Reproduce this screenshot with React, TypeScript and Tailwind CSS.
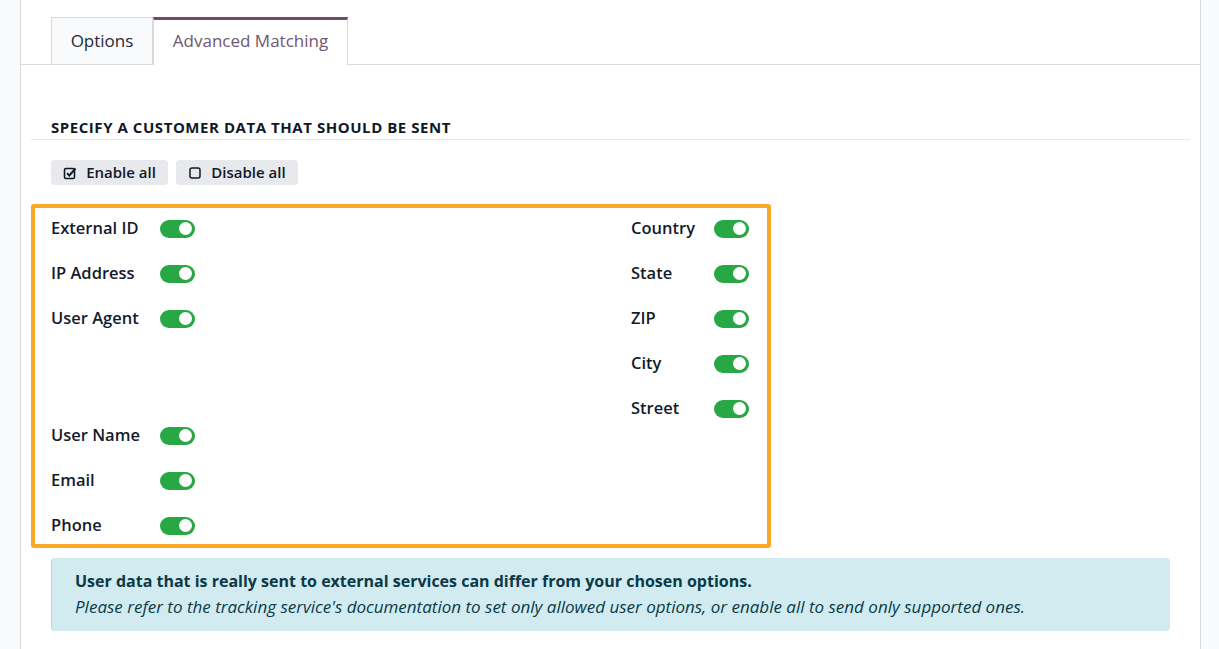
import React from "react";

const Toggle = () => (
  <div className="relative w-[35px] h-[18px] rounded-full bg-[#28a745] shrink-0">
    <div className="absolute right-[3px] top-[2.5px] w-[13px] h-[13px] rounded-full bg-white" />
  </div>
);

const Row = ({ label, w }: { label: string; w: string }) => (
  <div className="flex items-center h-[45px]">
    <div className={`${w} text-[16.5px] font-semibold text-[#141b2d]`}>{label}</div>
    <Toggle />
  </div>
);

const CheckedIcon = () => (
  <svg width="14" height="14" viewBox="0 0 14 14" fill="none">
    <rect x="1.5" y="2.5" width="10" height="10" rx="1.5" stroke="#111827" strokeWidth="1.6" />
    <path d="M4 7.2 L6.3 9.5 L12.5 2.5" stroke="#111827" strokeWidth="1.9" fill="none" />
  </svg>
);

const EmptyIcon = () => (
  <svg width="14" height="14" viewBox="0 0 14 14" fill="none">
    <rect x="2" y="2" width="10" height="10" rx="2" stroke="#111827" strokeWidth="1.5" />
  </svg>
);

export default function App() {
  return (
    <div
      className="w-full h-[649px] bg-[#f9fafb] flex overflow-hidden"
      style={{ fontFamily: "'Open Sans', 'Liberation Sans', sans-serif" }}
    >
      <div className="w-[20px] shrink-0" />
      <div className="w-[1181px] shrink-0 bg-white border-x border-[#d8dadd] flex flex-col">
        {/* Tabs */}
        <div className="flex pt-[17px] px-[30px] border-b border-[#d8dadd] h-[65px] shrink-0">
          <div className="w-[102px] h-[47px] flex items-center justify-center border border-b-0 border-[#d8dadd] bg-[#f9fafb] text-[17px] text-[#1f2937]">
            Options
          </div>
          <div className="w-[195px] h-[48px] flex items-center justify-center border-x border-[#d8dadd] border-t-[3px] border-t-[#714b67] bg-white text-[17px] text-[#6f5670] pb-[3px]">
            Advanced Matching
          </div>
        </div>

        {/* Heading */}
        <div className="mt-[52px] mx-[10px] border-b border-[#e5e7eb] pb-[1px] pl-[20px]">
          <div className="text-[15px] font-bold text-[#111827] leading-[21px] tracking-[0.55px]">
            SPECIFY A CUSTOMER DATA THAT SHOULD BE SENT
          </div>
        </div>

        {/* Buttons */}
        <div className="flex gap-[8px] mt-[20px] pl-[30px]">
          <div className="h-[25px] w-[117px] rounded-[4px] bg-[#e7e9ed] flex items-center justify-center gap-[9px] text-[15px] font-semibold text-[#111827]">
            <CheckedIcon />
            <span>Enable all</span>
          </div>
          <div className="h-[25px] w-[122px] rounded-[4px] bg-[#e7e9ed] flex items-center justify-center gap-[9px] text-[15px] font-semibold text-[#111827]">
            <EmptyIcon />
            <span>Disable all</span>
          </div>
        </div>

        {/* Highlighted box */}
        <div className="mt-[19px] ml-[10px] w-[740px] h-[344px] shrink-0 border-[4px] border-[#fba727] rounded-[3px]">
          <div className="flex mt-[-2px] pl-[16px]">
            <div className="w-[580px] flex flex-col">
              <Row label="External ID" w="w-[109px]" />
              <Row label="IP Address" w="w-[109px]" />
              <Row label="User Agent" w="w-[109px]" />
              <div className="h-[72px]" />
              <Row label="User Name" w="w-[109px]" />
              <Row label="Email" w="w-[109px]" />
              <Row label="Phone" w="w-[109px]" />
            </div>
            <div className="flex flex-col">
              <Row label="Country" w="w-[83px]" />
              <Row label="State" w="w-[83px]" />
              <Row label="ZIP" w="w-[83px]" />
              <Row label="City" w="w-[83px]" />
              <Row label="Street" w="w-[83px]" />
            </div>
          </div>
        </div>

        {/* Alert */}
        <div className="mt-[10px] ml-[30px] w-[1119px] h-[73px] shrink-0 rounded-[4px] bg-[#d1ebf0] border-l border-[#b3dbe4] pl-[23px] pt-[10px] text-[#0b3a47]">
          <div className="text-[16px] font-bold leading-[26px]">
            User data that is really sent to external services can differ from your chosen options.
          </div>
          <div className="text-[17px] italic leading-[26px]">
            Please refer to the tracking service's documentation to set only allowed user options, or enable all to send only supported ones.
          </div>
        </div>
      </div>
      <div className="flex-1" />
    </div>
  );
}
